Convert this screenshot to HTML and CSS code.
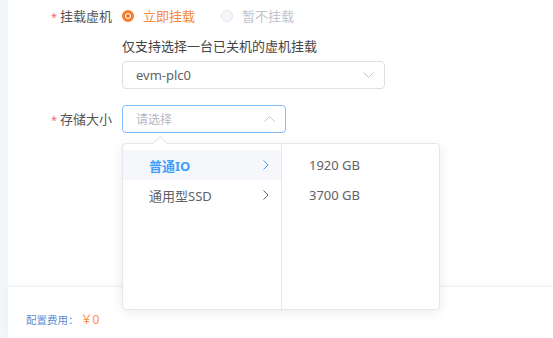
FILE: index.html
```html
<!DOCTYPE html>
<html lang="zh">
<head>
<meta charset="utf-8">
<link rel="stylesheet" href="styles.css">
</head>
<body>
<div class="main">
  <div class="form">
    <div class="form-item row-mount">
      <div class="label"><span class="req">*</span>挂载虚机</div>
      <div class="content">
        <div class="radios">
          <label class="radio checked"><span class="dot"></span><span class="rtext">立即挂载</span></label>
          <label class="radio disabled"><span class="dot"></span><span class="rtext">暂不挂载</span></label>
        </div>
        <div class="hint">仅支持选择一台已关机的虚机挂载</div>
        <div class="select vm-select">
          <span class="value">evm-plc0</span>
          <svg class="arrow" width="11" height="6" viewBox="0 0 11 6"><path d="M0.5 0.5 L5.5 5.5 L10.5 0.5" fill="none" stroke="#c0c4cc" stroke-width="1"/></svg>
        </div>
      </div>
    </div>
    <div class="form-item row-storage">
      <div class="label"><span class="req">*</span>存储大小</div>
      <div class="content">
        <div class="select size-select focused">
          <span class="placeholder">请选择</span>
          <svg class="arrow" width="11" height="6" viewBox="0 0 11 6"><path d="M0.5 5.5 L5.5 0.5 L10.5 5.5" fill="none" stroke="#c0c4cc" stroke-width="1"/></svg>
        </div>
        <div class="cascader">
          <span class="popper-arrow"></span>
          <ul class="menu menu-first">
            <li class="item active"><span>普通IO</span>
              <svg class="chev" width="6" height="10" viewBox="0 0 6 10"><path d="M0.5 0.5 L5 5 L0.5 9.5" fill="none" stroke="#409eff" stroke-width="1"/></svg>
            </li>
            <li class="item"><span>通用型SSD</span>
              <svg class="chev" width="6" height="10" viewBox="0 0 6 10"><path d="M0.5 0.5 L5 5 L0.5 9.5" fill="none" stroke="#606266" stroke-width="1"/></svg>
            </li>
          </ul>
          <ul class="menu menu-second">
            <li class="item"><span>1920 GB</span></li>
            <li class="item"><span>3700 GB</span></li>
          </ul>
        </div>
      </div>
    </div>
  </div>
  <div class="footer">
    <span class="fee-label">配置费用：</span><span class="fee">￥0</span>
  </div>
</div>
</body>
</html>
```

FILE: styles.css
```css
* { box-sizing: border-box; }
html, body { margin: 0; padding: 0; }
body {
  background: #f3f6f8;
  font-family: "Noto Sans", "Noto Sans CJK SC", sans-serif;
  font-size: 13px;
  color: #606266;
  height: 338px;
  overflow: hidden;
}
.main {
  margin-left: 8px;
  background: #fff;
  height: 338px;
  display: flex;
  flex-direction: column;
}
.form {
  height: 286px;
  padding-top: 6px;
}
.form-item {
  display: flex;
}
.label {
  width: 114px;
  padding-right: 10px;
  text-align: right;
  color: #555;
  line-height: 20px;
}
.req {
  color: #f56c6c;
  margin-right: 3px;
  font-size: 11px;
}
.content {
  position: relative;
}
.radios {
  display: flex;
  align-items: center;
  height: 20px;
}
.radio {
  display: flex;
  align-items: center;
  margin-right: 26px;
  line-height: 20px;
}
.radio .dot {
  width: 12px;
  height: 12px;
  border-radius: 50%;
  margin-right: 9px;
  position: relative;
}
.radio.checked .dot {
  border: 3px solid #f77a2c;
  background: #fff;
}
.radio.checked .dot::after {
  content: "";
  position: absolute;
  left: 1px;
  top: 1px;
  width: 4px;
  height: 4px;
  border-radius: 50%;
  background: #f77a2c;
}
.radio.checked .rtext { color: #f7873f; }
.radio.disabled .dot {
  border: 1px solid #e4e7ed;
  background: #f5f7fa;
}
.radio.disabled .rtext { color: #c0c4cc; }
.hint {
  margin-top: 10px;
  line-height: 20px;
  color: #444;
}
.select {
  margin-top: 5px;
  height: 28px;
  border: 1px solid #dcdfe6;
  border-radius: 4px;
  display: flex;
  align-items: center;
  justify-content: space-between;
  padding: 0 10px 0 13px;
  background: #fff;
}
.vm-select { width: 263px; }
.vm-select .value { color: #606266; }
.row-storage { margin-top: 16px; }
.row-storage .label { line-height: 28px; }
.size-select {
  margin-top: 0;
  width: 164px;
  border-color: #7dbcff;
}
.placeholder { color: #b4b8bf; font-size: 12px; }
.cascader {
  position: absolute;
  left: 0;
  top: 38px;
  width: 318px;
  height: 167px;
  background: #fff;
  border: 1px solid #e4e7ed;
  border-radius: 4px;
  box-shadow: 0 2px 12px rgba(0, 0, 0, 0.08);
  display: flex;
  z-index: 5;
}
.popper-arrow {
  position: absolute;
  top: -6px;
  left: 32px;
  width: 10px;
  height: 10px;
  background: #fff;
  border-left: 1px solid #e4e7ed;
  border-top: 1px solid #e4e7ed;
  transform: rotate(45deg);
}
.menu {
  list-style: none;
  margin: 0;
  padding: 6px 0 0;
  height: 100%;
}
.menu-first {
  width: 159px;
  border-right: 1px solid #e4e7ed;
}
.menu-second {
  flex: 1;
}
.item {
  height: 30px;
  display: flex;
  align-items: center;
  justify-content: space-between;
  color: #606266;
}
.menu-first .item { padding: 0 12px 0 26px; }
.menu-second .item { padding: 0 12px 0 27px; }
.item.active {
  background: #f5f7fa;
  color: #409eff;
  font-weight: bold;
}
.footer {
  flex: 1;
  border-top: 1px solid #ebeef5;
  box-shadow: 0 -2px 6px rgba(0, 0, 0, 0.03);
  display: flex;
  align-items: flex-end;
  padding: 0 0 10px 18px;
  font-size: 10.5px;
  line-height: 16px;
}
.fee-label { color: #5a8fd8; }
.fee { color: #ff8a3d; margin-left: 2px; font-size: 12px; }
```
